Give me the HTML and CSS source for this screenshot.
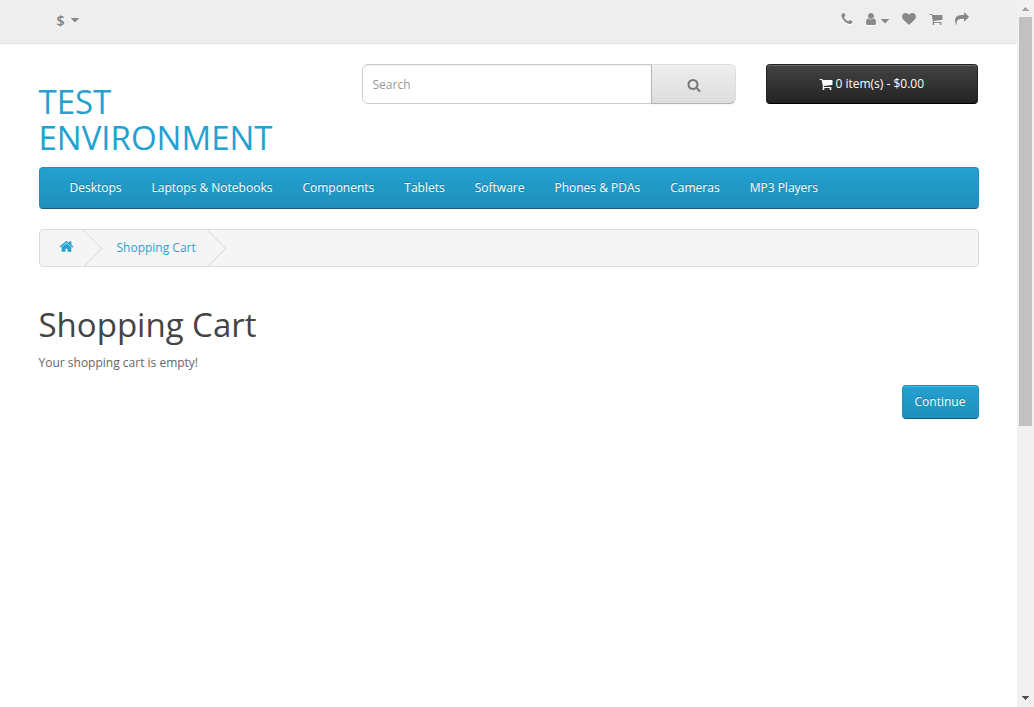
FILE: index.html
```html
<!DOCTYPE html>
<html lang="en">
<head>
<meta charset="utf-8">
<title>Shopping Cart</title>
<link rel="stylesheet" href="styles.css">
</head>
<body>
<svg class="defs" aria-hidden="true">
<symbol id="phone" viewBox="0 0 1792 1792"><path d="M1600 1240q0 27-10 70.5t-21 68.5q-21 50-122 106-94 51-186 51-27 0-53-3.5t-57.5-12.5-47-14.5-55.5-20.5-49-18q-98-35-175-83-127-79-264-216t-216-264q-48-77-83-175-3-9-18-49t-20.5-55.5-14.5-47-12.5-57.5-3.5-53q0-92 51-186 56-101 106-122 25-11 68.5-21t70.5-10q14 0 21 3 18 6 53 76 11 19 30 54t35 63.5 31 53.5q3 4 17.5 25t21.5 35.5 7 28.5q0 20-28.5 50t-62 55-62 53-28.5 46q0 9 5 22.5t8.5 20.5 14 24 11.5 19q76 137 174 235t235 174q2 1 19 11.5t24 14 20.5 8.5 22.5 5q18 0 46-28.5t53-62 55-62 50-28.5q14 0 28.5 7t35.5 21.5 25 17.5q25 15 53.5 31t63.5 35 54 30q70 35 76 53 3 7 3 21z"/></symbol>
<symbol id="user" viewBox="0 0 1792 1792"><path d="M1536 1399q0 109-62.5 187t-150.5 78h-854q-88 0-150.5-78t-62.5-187q0-85 8.5-160.5t31.5-152 58.5-131 94-89 134.5-34.5q131 128 313 128t313-128q76 0 134.5 34.5t94 89 58.5 131 31.5 152 8.5 160.5zm-256-887q0 159-112.5 271.5t-271.5 112.5-271.5-112.5-112.5-271.5 112.5-271.5 271.5-112.5 271.5 112.5 112.5 271.5z"/></symbol>
<symbol id="heart" viewBox="0 0 1792 1792"><path d="M896 1664q-26 0-44-18l-624-602q-10-8-27.5-26t-55.5-65.5-68-97.5-53.5-121-23.5-138q0-220 127-344t351-124q62 0 126.5 21.5t120 58 95.5 68.5 76 68q36-36 76-68t95.5-68.5 120-58 126.5-21.5q224 0 351 124t127 344q0 221-229 450l-623 600q-18 18-44 18z"/></symbol>
<symbol id="cart" viewBox="0 0 1792 1792"><path d="M704 1536q0 52-38 90t-90 38-90-38-38-90 38-90 90-38 90 38 38 90zm896 0q0 52-38 90t-90 38-90-38-38-90 38-90 90-38 90 38 38 90zm128-1088v512q0 24-16.5 42.5t-40.5 21.5l-1044 122q13 60 13 70 0 16-24 64h920q26 0 45 19t19 45-19 45-45 19h-1024q-26 0-45-19t-19-45q0-11 8-31.5t16-36 21.5-40 15.5-29.5l-177-823h-204q-26 0-45-19t-19-45 19-45 45-19h256q16 0 28.5 6.5t19.5 15.5 13 24.5 8 26 5.5 29.5 4.5 26h1201q26 0 45 19t19 45z"/></symbol>
<symbol id="share" viewBox="0 0 1792 1792"><path d="M1792 640q0 26-19 45l-512 512q-19 19-45 19t-45-19-19-45v-256h-224q-98 0-175.5 6t-154 21.5-133 42.5-105.5 69.5-80 101-48.5 138.5-17.5 181q0 55 5 123 0 6 2.5 23.5t2.5 26.5q0 15-8.5 25t-23.5 10q-16 0-28-17-7-9-13-22t-13.5-30-10.5-24q-127-285-127-451 0-199 53-333 162-403 875-403h224v-256q0-26 19-45t45-19 45 19l512 512q19 19 19 45z"/></symbol>
<symbol id="search" viewBox="0 0 1792 1792"><path d="M1216 832q0-185-131.5-316.5t-316.5-131.5-316.5 131.5-131.5 316.5 131.5 316.5 316.5 131.5 316.5-131.5 131.5-316.5zm512 832q0 52-38 90t-90 38q-54 0-90-38l-343-342q-179 124-399 124-143 0-273.5-55.5t-225-150-150-225-55.5-273.5 55.5-273.5 150-225 225-150 273.5-55.5 273.5 55.5 225 150 150 225 55.5 273.5q0 220-124 399l343 343q37 37 37 90z"/></symbol>
<symbol id="home" viewBox="0 0 1792 1792"><path d="M1472 992v480q0 26-19 45t-45 19h-384v-384h-256v384h-384q-26 0-45-19t-19-45v-480q0-1 .5-3t.5-3l575-474 575 474q1 2 1 6zm223-69l-62 74q-8 9-21 11h-3q-13 0-21-7l-692-577-692 577q-12 8-24 7-13-2-21-11l-62-74q-8-10-7-23.5t11-21.5l719-599q32-26 76-26t76 26l244 204v-195q0-14 9-23t23-9h192q14 0 23 9t9 23v408l219 182q10 8 11 21.5t-7 23.5z"/></symbol>
<symbol id="caret" viewBox="0 0 1792 1792"><path d="M1408 704q0 26-19 45l-448 448q-19 19-45 19t-45-19l-448-448q-19-19-19-45t19-45 45-19h896q26 0 45 19t19 45z"/></symbol>
</svg>
<div class="page">
  <nav class="top">
    <div class="currency"><strong>$</strong><svg class="icon caret"><use href="#caret"/></svg></div>
    <div class="links">
      <a><svg class="icon"><use href="#phone"/></svg></a>
      <a class="account"><svg class="icon"><use href="#user"/></svg><svg class="icon caret"><use href="#caret"/></svg></a>
      <a><svg class="icon"><use href="#heart"/></svg></a>
      <a class="basket"><svg class="icon"><use href="#cart"/></svg></a>
      <a class="checkout"><svg class="icon"><use href="#share"/></svg></a>
    </div>
  </nav>
  <div class="container">
    <header class="header">
      <h1 class="logo"><a>TEST ENVIRONMENT</a></h1>
      <div class="search">
        <input class="search-input" type="text" placeholder="Search">
        <button class="search-button"><svg class="icon"><use href="#search"/></svg></button>
      </div>
      <button class="cart-button"><svg class="icon"><use href="#cart"/></svg><span>0 item(s) - $0.00</span></button>
    </header>
    <nav class="menu">
      <a>Desktops</a><a>Laptops &amp; Notebooks</a><a>Components</a><a>Tablets</a><a>Software</a><a>Phones &amp; PDAs</a><a>Cameras</a><a>MP3 Players</a>
    </nav>
    <div class="breadcrumb">
      <a class="crumb crumb-home"><svg class="icon"><use href="#home"/></svg></a>
      <a class="crumb crumb-page">Shopping Cart</a>
    </div>
    <main>
      <h1 class="title">Shopping Cart</h1>
      <p class="message">Your shopping cart is empty!</p>
      <div class="actions"><a class="continue">Continue</a></div>
    </main>
  </div>
</div>
<div class="scrollbar">
  <svg class="arrow" viewBox="0 0 17 17"><path fill="#a3a3a3" d="M5 11h7v-1h-1v-1h-1v-1h-1v-1h-1v1h-1v1h-1v1h-1z"/></svg>
  <div class="thumb"></div>
  <svg class="arrow arrow-down" viewBox="0 0 17 17"><path fill="#505050" d="M5 6h7v1h-1v1h-1v1h-1v1h-1v-1h-1v-1h-1v-1h-1z"/></svg>
</div>
</body>
</html>
```

FILE: styles.css
```css
* { box-sizing: border-box; }
body {
  margin: 0;
  height: 707px;
  overflow: hidden;
  display: flex;
  background: #fff;
  color: #666;
  font: 400 12px/20px "Open Sans", sans-serif;
}
.defs { position: absolute; width: 0; height: 0; }
.icon { display: block; flex: none; width: 14px; height: 14px; fill: currentColor; }
.page { width: 1017px; }

.top {
  display: flex;
  justify-content: space-between;
  height: 44px;
  padding: 0 48.5px 0 56.5px;
  background: #eee;
  border-bottom: 1px solid #e2e2e2;
  color: #888;
}
.top .icon { filter: drop-shadow(0 1px 0 #fff); }
.top .caret { margin-top: 2px; }
.currency { display: flex; padding-top: 11px; text-shadow: 0 1px 0 #fff; }
.currency strong { width: 11.5px; font-size: 14px; line-height: 19px; }
.links { display: flex; padding-top: 12px; }
.links a { display: flex; }
.account { margin: 0 10px 0 9.5px; }
.basket { margin-left: 13px; }
.checkout { margin-left: 12px; }

.container { width: 940px; margin-left: 38.5px; }
.header { display: flex; align-items: flex-start; height: 123px; padding-top: 20px; }
.logo { width: 293px; margin: 20px 30px 0 0; color: #23a1d1; font-size: 33px; font-weight: 400; line-height: 36.3px; padding-right: 40px; }
.search { display: flex; width: 374px; height: 40px; margin-right: 30px; }
.search-input {
  width: 290px;
  padding: 2px 10px 0;
  border: 1px solid #ccc;
  border-radius: 6px 0 0 6px;
  box-shadow: inset 0 1px 1px rgba(0,0,0,.075);
  font: 12px/20px "Open Sans", sans-serif;
}
.search-input::placeholder { color: #999; opacity: 1; }
.search-button {
  display: flex;
  align-items: center;
  justify-content: center;
  width: 85px;
  margin-left: -1px;
  padding: 2px 0 0 1px;
  border: 1px solid;
  border-color: #ddd #ddd #b3b3b3 #b7b7b7;
  border-radius: 0 6px 6px 0;
  background: linear-gradient(#eee, #ddd);
  box-shadow: inset 0 1px 0 rgba(255,255,255,.2), 0 1px 2px rgba(0,0,0,.05);
  color: #777;
}
.cart-button {
  display: flex;
  align-items: center;
  justify-content: center;
  gap: 2.5px;
  width: 212px;
  height: 40px;
  padding: 0;
  border: 1px solid;
  border-color: #222 #222 #000;
  border-radius: 4px;
  background: linear-gradient(#444, #222);
  box-shadow: inset 0 1px 0 rgba(255,255,255,.2);
  color: #fff;
  font: 12px/18px "Open Sans", sans-serif;
}
.menu {
  display: flex;
  height: 42px;
  padding: 0 15px;
  border: 1px solid;
  border-color: #1f90bb #1f90bb #145e7a;
  border-radius: 4px;
  background: linear-gradient(#23a1d1, #1f90bb);
  color: #fff;
  line-height: 40px;
  text-shadow: 0 -1px 0 rgba(0,0,0,.25);
}
.menu a { padding: 0 15px; }

.breadcrumb {
  display: flex;
  height: 38px;
  margin: 20px 0;
  border: 1px solid #ddd;
  border-radius: 4px;
  background: #f5f5f5;
  color: #23a1d1;
  overflow: hidden;
}
.crumb { position: relative; padding: 8px 0; text-shadow: 0 1px 0 #fff; }
.crumb-home { width: 57.5px; padding-left: 19.5px; }
.crumb-home .icon { width: 15px; height: 15px; margin-top: 1px; }
.crumb-page { width: 123.5px; padding-left: 19.5px; }
.crumb::after {
  content: "";
  position: absolute;
  top: 5px;
  right: 0;
  width: 26px;
  height: 26px;
  border: solid #ddd;
  border-width: 1px 1px 0 0;
  transform: rotate(45deg);
}
.title { margin: 40px 0 0; color: #444; font-size: 33px; font-weight: 400; line-height: 36px; }
.message { margin: 10px 0; }
.actions { display: flex; justify-content: flex-end; padding-top: 2px; }
.continue {
  height: 34px;
  width: 77px;
  text-align: center;
  border: 1px solid;
  border-color: #1f90bb #1f90bb #145e7a;
  border-radius: 4px;
  background: linear-gradient(#23a1d1, #1f90bb);
  box-shadow: inset 0 1px 0 rgba(255,255,255,.2);
  color: #fff;
  line-height: 32px;
  text-shadow: 0 -1px 0 rgba(0,0,0,.25);
}
.scrollbar { display: flex; flex-direction: column; width: 17px; height: 707px; background: #f1f1f1; }
.arrow { display: block; width: 17px; height: 17px; }
.arrow-down { margin-top: auto; }
.thumb { width: 13px; height: 409px; margin-left: 2px; background: #c1c1c1; }
```
